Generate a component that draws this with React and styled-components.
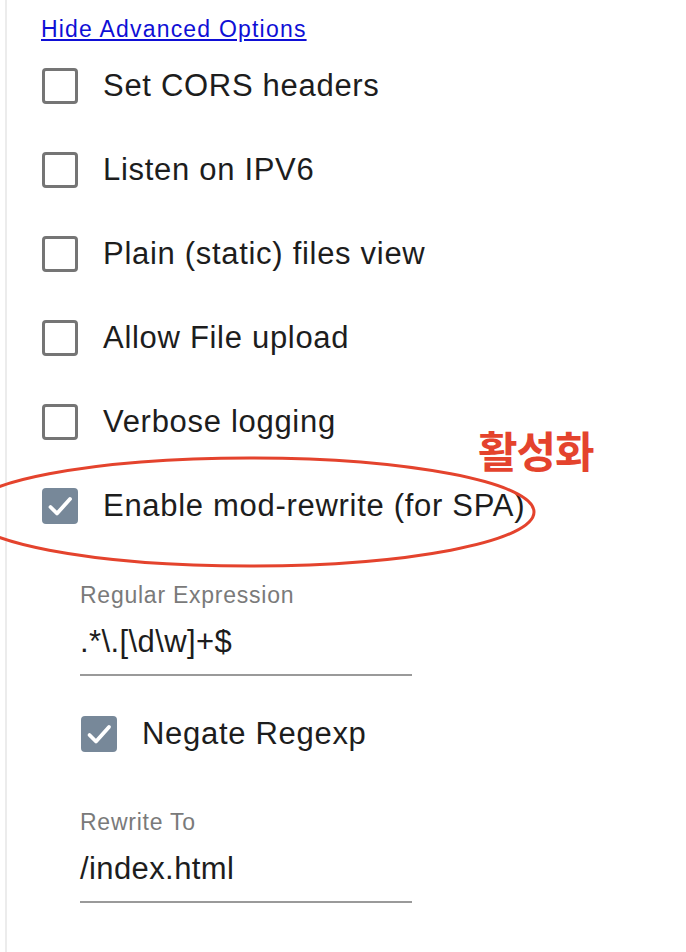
import React from "react";
import styled, { createGlobalStyle } from "styled-components";

const Global = createGlobalStyle`
  html, body { margin: 0; padding: 0; background: #fff; }
  body { font-family: "Liberation Sans", Arial, sans-serif; color: #1d1d1d; }
`;

const Page = styled.div`
  position: relative;
  width: 686px;
  height: 952px;
  overflow: hidden;
  padding-left: 5px;
  box-sizing: border-box;
`;

const Panel = styled.div`
  border-left: 2px solid #ececec;
  height: 100%;
  padding: 14px 0 0 34px;
  box-sizing: border-box;
`;

const ToggleLink = styled.a`
  display: block;
  font-size: 23px;
  line-height: 30px;
  letter-spacing: 1.2px;
  color: #0f0fd6;
  text-decoration: underline;
  text-underline-offset: 2px;
  cursor: pointer;
`;

const OptionRow = styled.label`
  display: flex;
  align-items: center;
  height: 84px;
  gap: 25px;
  margin-left: ${(p) => (p.$indent ? "40px" : "1px")};
  margin-top: ${(p) => (p.$top ? p.$top : "0")};
`;

const Box = styled.span`
  width: 36px;
  height: 36px;
  box-sizing: border-box;
  border-radius: 4px;
  flex: none;
  display: flex;
  align-items: center;
  justify-content: center;
  border: ${(p) => (p.$checked ? "none" : "3px solid #757575")};
  background: ${(p) => (p.$checked ? "#778899" : "#fff")};
`;

const OptionText = styled.span`
  font-size: 31px;
  letter-spacing: 0.7px;
  color: #1d1d1d;
`;

const Sub = styled.div`
  padding-left: 39px;
`;

const Field = styled.div`
  width: 332px;
  margin-top: ${(p) => p.$top || "0"};
`;

const FieldLabel = styled.div`
  font-size: 23px;
  line-height: 28px;
  letter-spacing: 0.75px;
  color: #7a7a7a;
`;

const FieldInput = styled.div`
  margin-top: 15px;
  font-size: 31px;
  line-height: 36px;
  letter-spacing: 0.4px;
  color: #1d1d1d;
  padding-bottom: 14px;
  border-bottom: 2px solid #9a9a9a;
`;

const Annotation = styled.div`
  position: absolute;
  left: 478px;
  top: 419px;
  font-family: "Noto Sans CJK KR", sans-serif;
  font-weight: 700;
  font-size: 43px;
  line-height: 60px;
  color: #e4432d;
  letter-spacing: -1px;
`;

const Ellipse = styled.svg`
  position: absolute;
  left: 0;
  top: 440px;
  pointer-events: none;
`;

function Check() {
  return (
    <svg width="36" height="36" viewBox="0 0 36 36">
      <polyline
        points="8.5,19 15,25.5 28,11"
        fill="none"
        stroke="#fff"
        strokeWidth="3.8"
        strokeLinecap="round"
        strokeLinejoin="round"
      />
    </svg>
  );
}

function Option({ label, checked, indent, top }) {
  return (
    <OptionRow $indent={indent} $top={top}>
      <Box $checked={checked}>{checked && <Check />}</Box>
      <OptionText>{label}</OptionText>
    </OptionRow>
  );
}

export default function App() {
  const options = [
    ["Set CORS headers", false],
    ["Listen on IPV6", false],
    ["Plain (static) files view", false],
    ["Allow File upload", false],
    ["Verbose logging", false],
    ["Enable mod-rewrite (for SPA)", true],
  ];
  return (
    <>
      <Global />
      <Page>
        <Panel>
          <ToggleLink>Hide Advanced Options</ToggleLink>
          {options.map(([l, c]) => (
            <Option key={l} label={l} checked={c} />
          ))}
          <Sub>
            <Field $top="33px">
              <FieldLabel>Regular Expression</FieldLabel>
              <FieldInput>.*\.[\d\w]+$</FieldInput>
            </Field>
          </Sub>
          <Option label="Negate Regexp" checked indent top="16px" />
          <Sub>
            <Field $top="32px">
              <FieldLabel>Rewrite To</FieldLabel>
              <FieldInput>/index.html</FieldInput>
            </Field>
          </Sub>
        </Panel>
        <Annotation>활성화</Annotation>
        <Ellipse width="686" height="150" viewBox="0 0 686 150">
          <ellipse
            cx="250"
            cy="72"
            rx="284"
            ry="54"
            fill="none"
            stroke="#e4432d"
            strokeWidth="3"
          />
        </Ellipse>
      </Page>
    </>
  );
}
